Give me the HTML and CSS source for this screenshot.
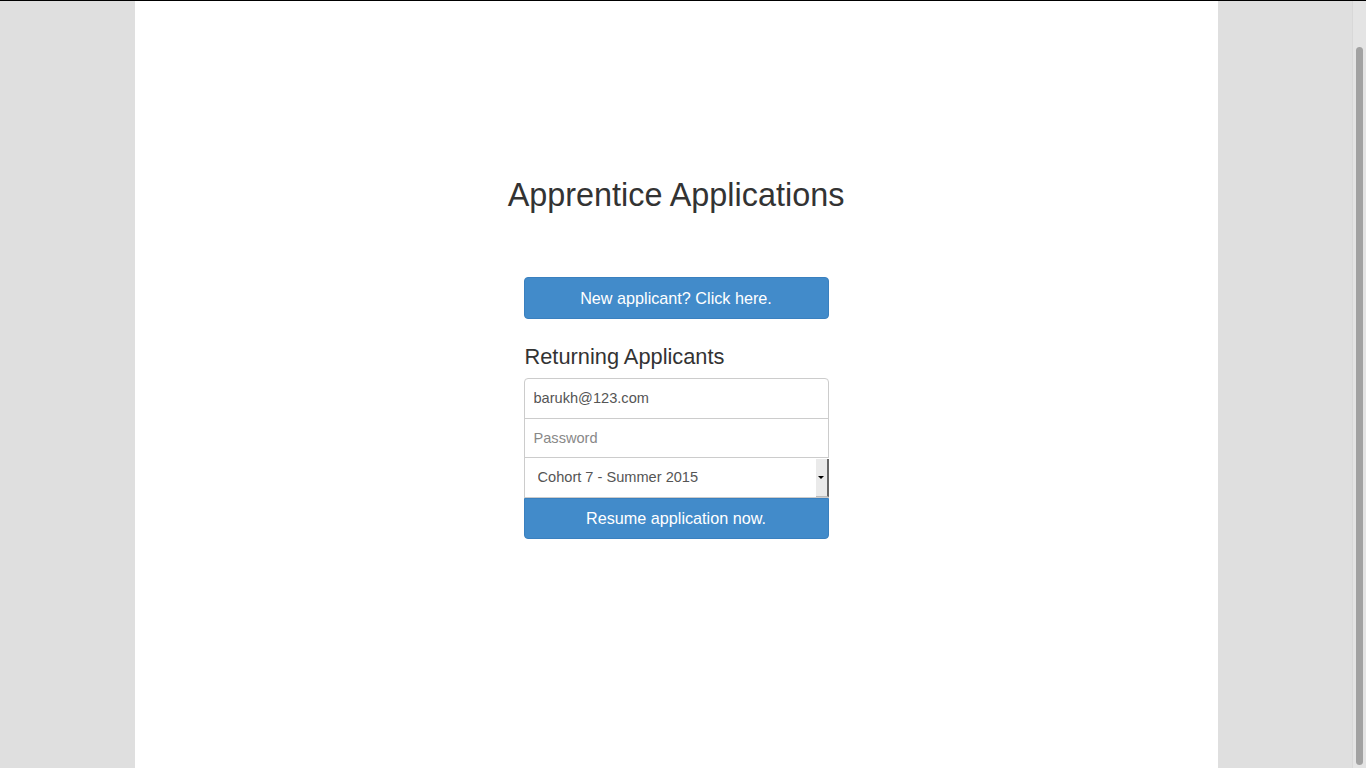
FILE: index.html
```html
<!DOCTYPE html>
<html lang="en">
<head>
<meta charset="utf-8">
<title>Apprentice Applications</title>
<link rel="stylesheet" href="styles.css">
</head>
<body>
<div class="window">
  <div class="viewport">
    <main class="container">
      <h1 class="title">Apprentice Applications</h1>
      <div class="panel">
        <a class="btn btn-new" href="#">New applicant? Click here.</a>
        <h3 class="subtitle">Returning Applicants</h3>
        <form class="login">
          <input class="field field-email" type="email" value="barukh@123.com">
          <input class="field field-password" type="password" placeholder="Password">
          <div class="select-wrap">
            <select class="select">
              <option>Cohort 7 - Summer 2015</option>
            </select>
            <span class="select-arrow"><span class="tri"></span></span>
          </div>
          <button class="btn btn-resume" type="button">Resume application now.</button>
        </form>
      </div>
    </main>
  </div>
  <div class="scrollbar"><div class="thumb"></div></div>
</div>
</body>
</html>
```
FILE: styles.css
```css
html, body {
  margin: 0;
  padding: 0;
  height: 100%;
  overflow: hidden;
}
body {
  background: #dfdfdf;
  font-family: "Liberation Sans", Helvetica, Arial, sans-serif;
  color: #333;
}
.window {
  display: flex;
  height: 768px;
  border-top: 1px solid #000;
  box-sizing: border-box;
}
.viewport {
  flex: 1;
  display: flex;
  justify-content: center;
}
.container {
  width: 1083px;
  background: #fff;
  padding-top: 177px;
  box-sizing: border-box;
}
.title {
  margin: 0;
  font-size: 32.4px;
  font-weight: 400;
  line-height: 1.1;
  text-align: center;
  color: #333;
}
.panel {
  width: 305px;
  margin: 63px auto 0;
}
.btn {
  display: flex;
  align-items: center;
  justify-content: center;
  box-sizing: border-box;
  width: 100%;
  background: #428bca;
  border: 1px solid #3a80bf;
  color: #fff;
  font-family: inherit;
  font-size: 16.2px;
  text-decoration: none;
  cursor: pointer;
}
.btn-new {
  height: 42px;
  border-radius: 4px;
  padding-top: 1px;
}
.subtitle {
  margin: 26px 0 9px;
  padding-left: 1px;
  font-size: 21.8px;
  font-weight: 400;
  line-height: 1.1;
  color: #333;
}
.login {
  display: flex;
  flex-direction: column;
  margin: 0;
}
.field {
  display: block;
  box-sizing: border-box;
  width: 100%;
  margin: 0;
  padding: 0 9px;
  border: 1px solid #ccc;
  background: #fff;
  font-family: inherit;
  font-size: 14.6px;
  color: #555;
  outline: none;
}
.field::placeholder {
  color: #888;
}
.field-email {
  height: 41px;
  border-radius: 4px 4px 0 0;
}
.field-password {
  height: 40px;
  margin-top: -1px;
}
.select-wrap {
  display: flex;
  height: 41px;
  margin-top: -1px;
  box-sizing: border-box;
  border: 1px solid #ccc;
  border-right: none;
  background: #fff;
}
.select {
  flex: 1;
  -webkit-appearance: none;
  appearance: none;
  border: none;
  background: #fff;
  padding: 0 0 0 13px;
  margin: 0;
  font-family: inherit;
  font-size: 14.6px;
  color: #555;
  outline: none;
}
.select-arrow {
  width: 11px;
  display: flex;
  align-items: center;
  justify-content: center;
  background: #eaeaea;
  border-right: 2px solid #666;
  border-bottom: 1px solid #bbb;
  margin: 1px 0 0;
}
.tri {
  width: 0;
  height: 0;
  border-left: 3px solid transparent;
  border-right: 3px solid transparent;
  border-top: 3px solid #000;
}
.btn-resume {
  height: 41px;
  margin-top: 0;
  border-radius: 0 0 4px 4px;
  padding: 0;
}
.scrollbar {
  width: 14px;
  background: #e4e4e4;
  border-left: 1px solid #d8d8d8;
  box-sizing: border-box;
  padding: 46px 3px 3px;
}
.thumb {
  height: 100%;
  background: #a2a2a2;
  border-radius: 4px;
}
```
